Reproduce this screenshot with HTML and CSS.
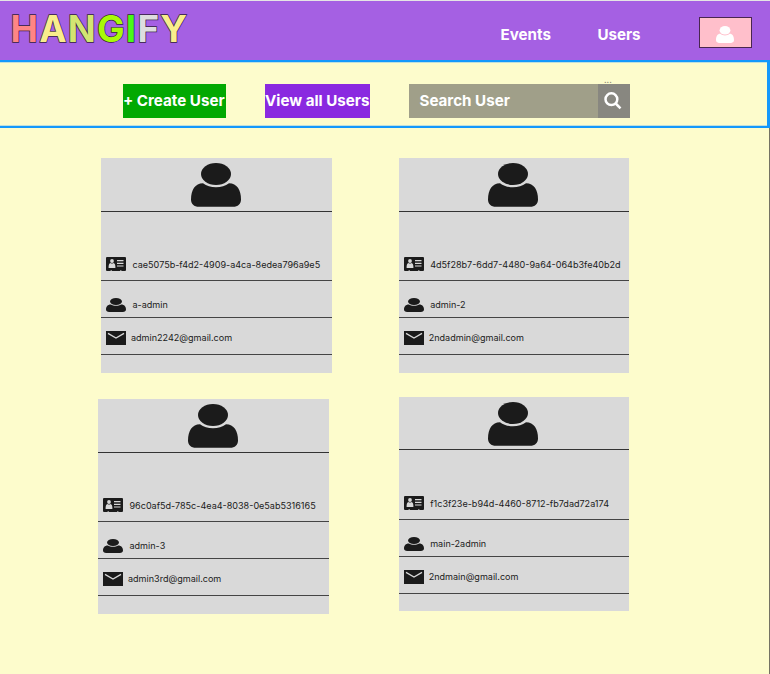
FILE: index.html
```
<!DOCTYPE html>
<html lang="en">
<head>
<meta charset="utf-8">
<title>Hangify</title>
<link rel="stylesheet" href="styles.css">
</head>
<body>
<svg class="sprite" aria-hidden="true">
  <symbol id="person" viewBox="0 0 50 44" preserveAspectRatio="none">
    <ellipse cx="25" cy="11" rx="15" ry="11"/>
    <path d="M12 20.2C4 20.2 0 27 0 36.500C0 41 3 43.800 8 43.800H42C47 43.800 50 41 50 36.500C50 27 46 20.200 38 20.200C34.500 22.800 30 24.300 25 24.300S15.500 22.800 12 20.200Z"/>
  </symbol>
  <symbol id="idcard" viewBox="0 0 20 14">
    <path fill-rule="evenodd" d="M1 0H19Q20 0 20 1V13Q20 14 19 14H15.400V13.300H14.200V14H5.800V13.300H4.600V14H1Q0 14 0 13V1Q0 0 1 0Z"/>
    <g class="cutout">
      <ellipse cx="6" cy="4" rx="1.900" ry="2"/>
      <path d="M2.600 11Q2.400 6.500 4.500 6.100Q6 7.100 7.500 6.100Q9.600 6.500 9.400 11Z"/>
      <path d="M11 3H17.500V4.200H11ZM11 5.700H17.500V6.900H11ZM11 8.400H17.500V9.600H11Z"/>
    </g>
  </symbol>
  <symbol id="mail" viewBox="0 0 20 14">
    <path d="M0 0H20V14H0Z"/>
    <path class="flap" d="M2 2.400L10 7L18 2.400"/>
  </symbol>
</svg>
<header class="topbar">
  <h1 class="logo"><span class="l1">H</span><span class="l2">A</span><span class="l3">N</span><span class="l4">G</span><span class="l5">I</span><span class="l6">F</span><span class="l7">Y</span></h1>
  <nav class="nav"><a>Events</a><a>Users</a></nav>
  <div class="profile"><svg><use href="#person"/></svg></div>
</header>
<section class="toolbar">
  <button class="btn create">+ Create User</button>
  <button class="btn view">View all Users</button>
  <div class="search">
    <span class="label">Search User</span>
    <span class="go"><svg viewBox="0 0 18 18"><circle cx="7.400" cy="7.200" r="5.900"/><path d="M11.700 11.500L16.500 16.300"/></svg></span>
    <span class="dots">...</span>
  </div>
</section>
<main class="cards">
  <div class="column first">
    <article class="card">
      <div class="avatar"><svg><use href="#person"/></svg></div>
      <div class="row id"><svg><use href="#idcard"/></svg><span>cae5075b-f4d2-4909-a4ca-8edea796a9e5</span></div>
      <div class="row name"><svg><use href="#person"/></svg><span>a-admin</span></div>
      <div class="row email"><svg><use href="#mail"/></svg><span>admin2242@gmail.com</span></div>
    </article>
    <article class="card offset">
      <div class="avatar"><svg><use href="#person"/></svg></div>
      <div class="row id"><svg><use href="#idcard"/></svg><span>96c0af5d-785c-4ea4-8038-0e5ab5316165</span></div>
      <div class="row name"><svg><use href="#person"/></svg><span>admin-3</span></div>
      <div class="row email"><svg><use href="#mail"/></svg><span>admin3rd@gmail.com</span></div>
    </article>
  </div>
  <div class="column second">
    <article class="card">
      <div class="avatar"><svg><use href="#person"/></svg></div>
      <div class="row id"><svg><use href="#idcard"/></svg><span>4d5f28b7-6dd7-4480-9a64-064b3fe40b2d</span></div>
      <div class="row name"><svg><use href="#person"/></svg><span>admin-2</span></div>
      <div class="row email"><svg><use href="#mail"/></svg><span>2ndadmin@gmail.com</span></div>
    </article>
    <article class="card">
      <div class="avatar"><svg><use href="#person"/></svg></div>
      <div class="row id"><svg><use href="#idcard"/></svg><span>f1c3f23e-b94d-4460-8712-fb7dad72a174</span></div>
      <div class="row name"><svg><use href="#person"/></svg><span>main-2admin</span></div>
      <div class="row email"><svg><use href="#mail"/></svg><span>2ndmain@gmail.com</span></div>
    </article>
  </div>
</main>
</body>
</html>
```
FILE: styles.css
```
* { box-sizing: border-box; }
body {
  margin: 0;
  height: 674px;
  overflow: hidden;
  display: flex;
  flex-direction: column;
  background: #fdfccc;
  font-family: Inter, sans-serif;
  color: #1b1b1b;
}
.sprite { position: absolute; width: 0; height: 0; }
.topbar {
  flex: none;
  height: 60px;
  border-top: 1px solid #e5e5e5;
  background: #a560e3;
  display: flex;
  align-items: flex-start;
  padding-left: 10.500px;
}
.logo {
  margin: 5px 0 0;
  width: 490px;
  font-size: 36.700px;
  line-height: 45px;
  font-weight: 700;
  letter-spacing: 1.250px;
  white-space: nowrap;
  -webkit-text-stroke: 1.400px #33203f;
  paint-order: stroke fill;
}
.l1 { color: #ff8585; }
.l2, .l7 { color: #f9ed8c; }
.l3 { color: #d3e572; }
.l4 { color: #a8fb08; }
.l5 { color: #48fb18; }
.l6 { color: #dddddf; }
.nav {
  width: 198px;
  padding-top: 24px;
  display: flex;
  gap: 46.500px;
  color: #fff;
  font-size: 15.150px;
  line-height: 20px;
  font-weight: 700;
}
.profile {
  width: 53px;
  height: 31px;
  margin-top: 16px;
  border: 1px solid #49264f;
  background: #ffbfcb;
  display: flex;
  justify-content: center;
  padding-top: 8px;
}
.profile svg { width: 18px; height: 17px; fill: #fff; }
.toolbar {
  flex: none;
  height: 68px;
  border: solid #1498fb;
  border-width: 2px 3px 2px 0;
  box-shadow: inset 0 1px #bfe0dc, inset 0 -1px #bfe0dc;
  padding: 22px 0 0 123px;
  display: flex;
}
.btn, .search {
  height: 34px;
  color: #fff;
  font: 700 15.150px/34px Inter, sans-serif;
  white-space: nowrap;
}
.btn { border: 0; padding: 0; text-align: left; }
.create { width: 103px; background: #02a902; margin-right: 39px; }
.view { width: 105px; background: #8a29e0; margin-right: 39px; }
.search {
  position: relative;
  width: 220.500px;
  display: flex;
  background: #a09f89;
}
.label { flex: 1; padding-left: 10.500px; }
.go { width: 32px; background: #888780; display: flex; justify-content: center; padding-top: 8px; }
.go svg { width: 18px; height: 18px; margin-right: 2px; fill: none; stroke: #fff; stroke-width: 2.500; }
.dots { position: absolute; left: 195px; top: -9px; font-size: 9px; line-height: 10px; font-weight: 400; color: #8e8c78; }
.cards {
  flex: 1;
  display: flex;
  gap: 67.200px;
  padding: 30.300px 0 0 101px;
  border-right: 1px solid #747263;
}
.column { width: 230.500px; display: flex; flex-direction: column; gap: 23.500px; }
.first { gap: 26px; }
.card { height: 214.800px; background: #d9d9d9; }
.offset { margin-left: -3px; margin-right: 3px; }
.avatar {
  height: 53.500px;
  border-bottom: 1px solid #333;
  display: flex;
  justify-content: center;
  padding: 5px 1.500px 0 0;
}
.avatar svg { width: 50px; height: 44px; fill: #1b1b1b; }
.row {
  display: flex;
  align-items: flex-end;
  padding-left: 5px;
  border-bottom: 1px solid #444;
  font-size: 9.050px;
  line-height: 14px;
  white-space: nowrap;
}
.row svg { flex: none; width: 20px; height: 14px; fill: #1b1b1b; }
.row span { margin-left: 6.500px; }
.id { height: 69.500px; padding-bottom: 9px; }
.id span { margin-bottom: -1px; }
.name { height: 37px; padding-bottom: 5px; }
.email { height: 37px; padding-bottom: 9px; }
.email span { margin-left: 5px; }
.row .cutout, .cutout { fill: #d9d9d9; }
.flap { fill: none; stroke: #d9d9d9; stroke-width: 1.300; }
```
